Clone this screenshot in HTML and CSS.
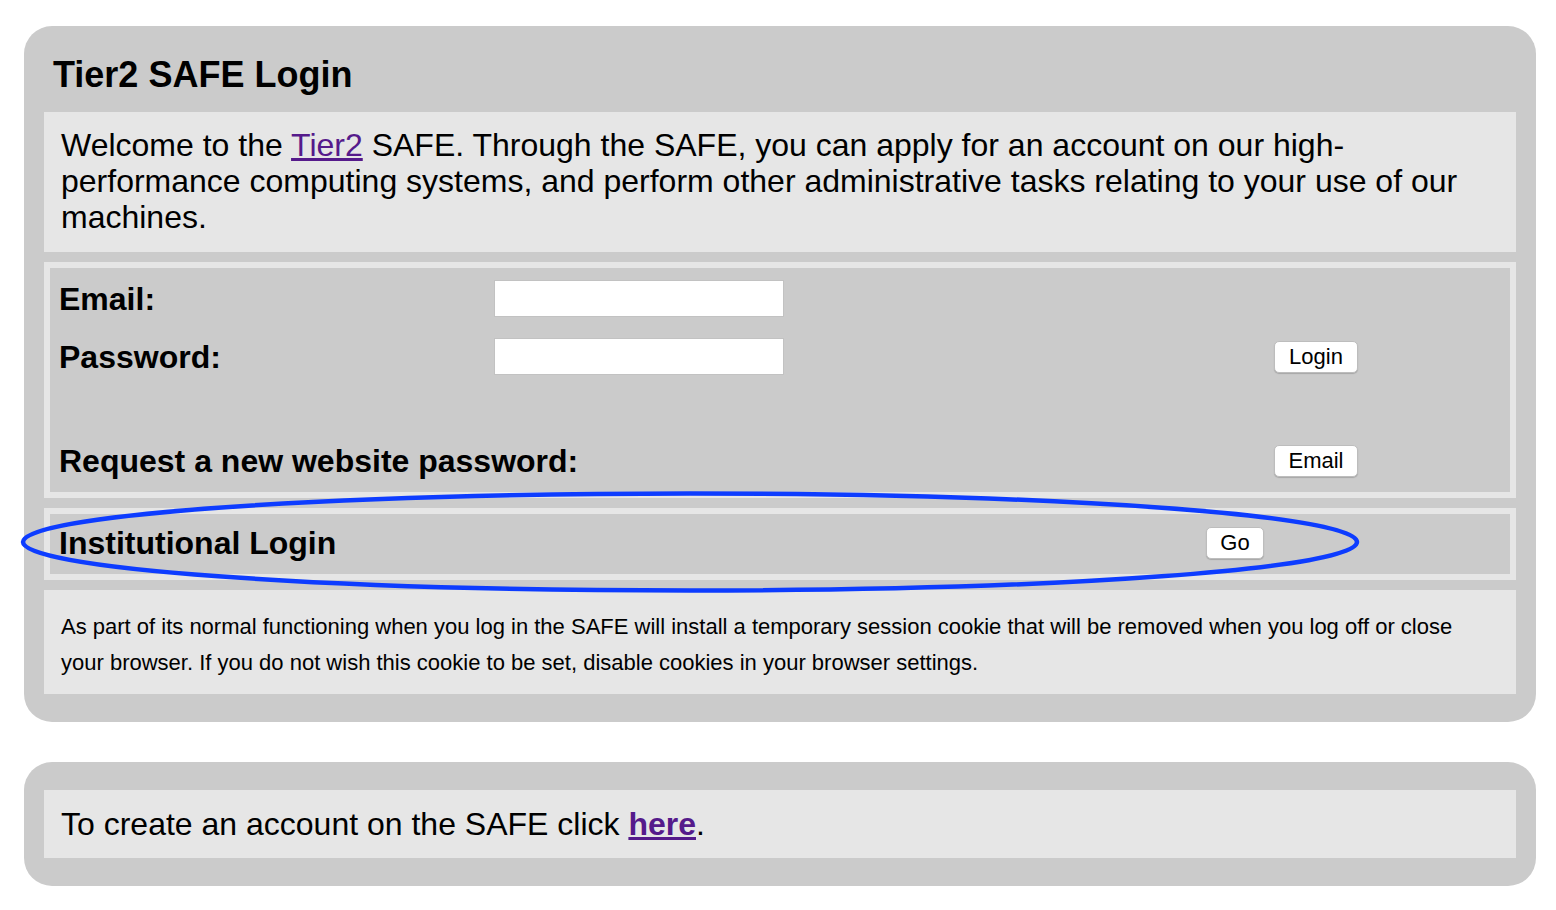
FILE: index.html
```html
<!DOCTYPE html>
<html>
<head>
<meta charset="utf-8">
<title>Tier2 SAFE Login</title>
<link rel="stylesheet" href="styles.css">
</head>
<body>
<div class="page">
  <div class="panel">
    <h1 class="title">Tier2 SAFE Login</h1>
    <div class="box welcome">Welcome to the <a class="link" href="#">Tier2</a> SAFE. Through the SAFE, you can apply for an account on our high-performance computing systems, and perform other administrative tasks relating to your use of our machines.</div>
    <div class="formbox">
      <div class="row row-email">
        <span class="label">Email:</span>
        <input class="field" type="text">
      </div>
      <div class="row row-pass">
        <span class="label">Password:</span>
        <input class="field" type="password">
        <button class="btn btn-right">Login</button>
      </div>
      <div class="row row-req">
        <span class="label">Request a new website password:</span>
        <button class="btn btn-right">Email</button>
      </div>
    </div>
    <div class="formbox inst">
      <div class="row">
        <span class="label">Institutional Login</span>
        <button class="btn btn-go">Go</button>
      </div>
    </div>
    <div class="box cookie">As part of its normal functioning when you log in the SAFE will install a temporary session cookie that will be removed when you log off or close your browser. If you do not wish this cookie to be set, disable cookies in your browser settings.</div>
  </div>
  <div class="panel panel2">
    <div class="box create">To create an account on the SAFE click <a class="link strong" href="#">here</a>.</div>
  </div>
  <svg class="annot" width="1400" height="110" viewBox="0 0 1400 110">
    <ellipse cx="690" cy="55" rx="667" ry="48.5" fill="none" stroke="#0d3cff" stroke-width="4.5"/>
  </svg>
</div>
</body>
</html>
```
FILE: styles.css
```css
html, body {
  margin: 0;
  padding: 0;
  background: #ffffff;
}
body {
  font-family: "Liberation Sans", Arial, Helvetica, sans-serif;
  color: #000;
}
.page {
  position: relative;
  padding: 26px 20px 24px 24px;
}
.panel {
  background: #cbcbcb;
  border-radius: 28px;
  padding: 0 20px 28px 20px;
  display: flex;
  flex-direction: column;
  gap: 10px;
}
.panel2 {
  margin-top: 40px;
  padding-top: 28px;
}
.title {
  margin: 0;
  font-size: 36px;
  font-weight: bold;
  line-height: 40px;
  padding: 29px 0 7px 9px;
}
.box {
  background: #e6e6e6;
  padding: 16px 30px 16px 17px;
  line-height: 36px;
}
.welcome {
  font-size: 32px;
  padding-top: 15px;
  padding-bottom: 17px;
}
.cookie {
  font-size: 22px;
  padding-top: 19px;
  padding-bottom: 13px;
}
.create {
  font-size: 32px;
}
.link {
  color: #551a8b;
  text-decoration: underline;
}
.strong {
  font-weight: bold;
}
.formbox {
  border: 6px solid #e6e6e6;
  background: #cbcbcb;
  padding: 12px 0 15px 9px;
  display: flex;
  flex-direction: column;
}
.row {
  display: flex;
  align-items: center;
}
.row-pass {
  margin-top: 21px;
}
.row-req {
  margin-top: 70px;
  height: 32px;
}
.label {
  font-size: 32px;
  font-weight: bold;
  line-height: 36px;
}
.row-email .label,
.row-pass .label {
  width: 435px;
}
.field {
  width: 290px;
  height: 37px;
  box-sizing: border-box;
  border: 1px solid #c2c2c2;
  background: #fff;
  margin: 0;
  padding: 0;
}
.btn {
  font-family: "Liberation Sans", Arial, sans-serif;
  font-size: 22px;
  height: 32px;
  box-sizing: border-box;
  padding: 0 10px;
  background: #fff;
  border: 1px solid #bdbdbd;
  border-radius: 5px;
  box-shadow: 0 1px 1px rgba(0,0,0,0.18);
  color: #000;
  margin: 0;
}
.btn-right {
  margin-left: auto;
  margin-right: 152px;
  width: 84px;
}
.inst {
  padding: 11px 0 13px 9px;
}
.btn-go {
  margin-left: auto;
  margin-right: 246px;
  width: 58px;
}
.annot {
  position: absolute;
  left: 0;
  top: 487px;
  pointer-events: none;
}
```
